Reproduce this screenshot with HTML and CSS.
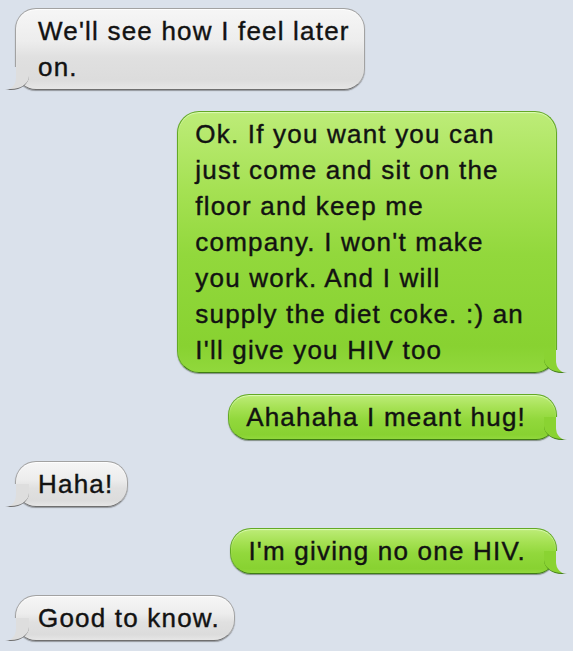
FILE: index.html
```html
<!DOCTYPE html>
<html lang="en">
<head>
<meta charset="utf-8">
<title>Messages</title>
<link rel="stylesheet" href="styles.css">
</head>
<body>
  <main class="thread">
    <div class="msg in">We'll see how I feel later<br>on.</div>
    <div class="msg out big">Ok. If you want you can<br>just come and sit on the<br>floor and keep me<br>company. I won't make<br>you work. And I will<br>supply the diet coke. :) an<br>I'll give you HIV too</div>
    <div class="msg out">Ahahaha I meant hug!</div>
    <div class="msg in">Haha!</div>
    <div class="msg out">I'm giving no one HIV.</div>
    <div class="msg in">Good to know.</div>
  </main>
</body>
</html>
```

FILE: styles.css
```css
html, body {
  margin: 0;
  padding: 0;
  background: #dae1eb;
}

body {
  width: 573px;
  height: 651px;
  overflow: hidden;
  font-family: "Liberation Sans", Arial, sans-serif;
}

.thread {
  display: flex;
  flex-direction: column;
  gap: 21px;
  padding-top: 8px;
}

.msg {
  position: relative;
  font-size: 26px;
  line-height: 36px;
  letter-spacing: 1.2px;
  color: #121212;
  -webkit-text-stroke: 0.4px #121212;
  white-space: nowrap;
  padding: 4px 14px 4px 22px;
  border-radius: 21px;
}

.msg.in {
  align-self: flex-start;
  margin-left: 15px;
  background: linear-gradient(to bottom, #f6f6f6 0%, #ededed 40%, #e0e0e0 60%, #dcdcdc 88%, #e6e6e6 100%);
  border: 1px solid #a2a2a2;
  border-bottom-color: #6f6f6f;
  box-shadow: 0 1px 1px rgba(60, 60, 60, 0.45), inset 0 1px 1px rgba(255, 255, 255, 0.9);
}

.msg.out {
  align-self: flex-end;
  margin-right: 16px;
  padding: 4px 30px 4px 17px;
  background: linear-gradient(to bottom, #bdec78 0%, #a5e153 30%, #92d83c 55%, #88d231 90%, #91d83c 100%);
  border: 1px solid #63a925;
  border-bottom-color: #3f7c14;
  box-shadow: 0 1px 1px rgba(40, 60, 30, 0.5), inset 0 1px 1px rgba(230, 255, 200, 0.8);
}

.msg.big {
  border-radius: 22px;
  padding-right: 32px;
}

/* tails */
.msg::before,
.msg::after {
  content: "";
  position: absolute;
  bottom: -1px;
  height: 22px;
}

.msg.in::before {
  left: -11px;
  width: 24px;
  background: #dedede;
  border-bottom: 1px solid #6f6f6f;
  border-bottom-right-radius: 18px 14px;
}

.msg.in::after {
  left: -30px;
  width: 30px;
  height: 23px;
  background: #dae1eb;
  border-bottom-right-radius: 11px 12px;
}

.msg.out::before {
  right: -12px;
  width: 24px;
  background: #8ad332;
  border-bottom: 1px solid #3f7c14;
  border-bottom-left-radius: 18px 14px;
}

.msg.out::after {
  right: -30px;
  width: 30px;
  height: 23px;
  background: #dae1eb;
  border-bottom-left-radius: 11px 12px;
}
```
